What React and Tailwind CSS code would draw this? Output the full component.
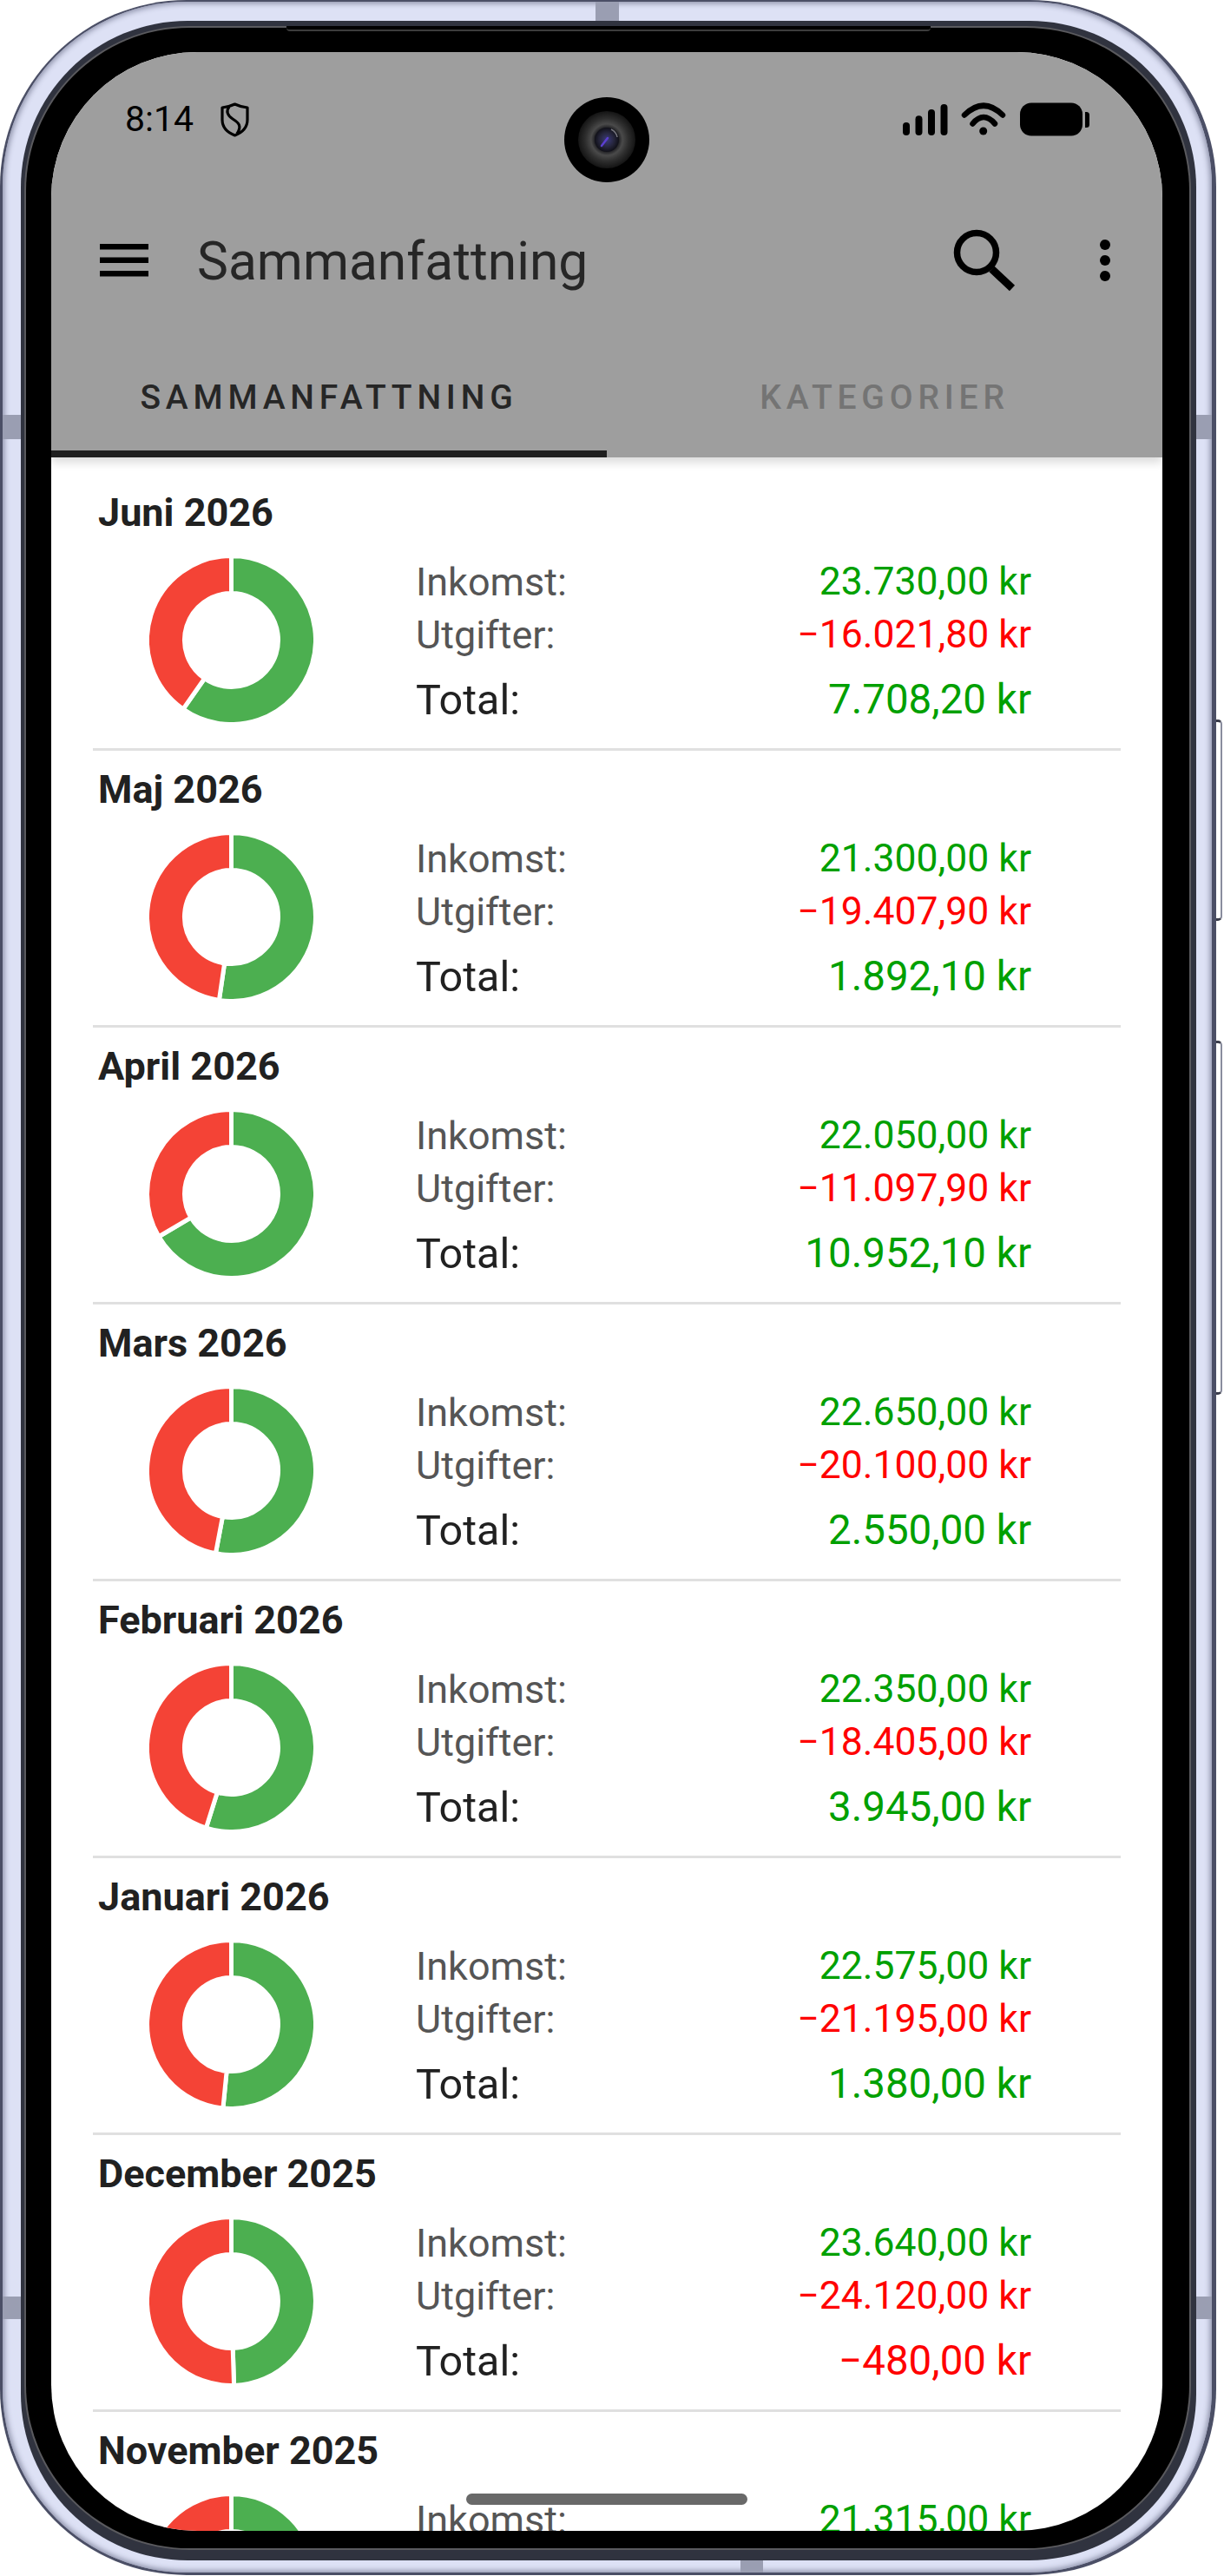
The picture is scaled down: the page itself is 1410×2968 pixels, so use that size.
const months = [
  { name: 'Juni 2026', income: 23730, expense: 16021.8 },
  { name: 'Maj 2026', income: 21300, expense: 19407.9 },
  { name: 'April 2026', income: 22050, expense: 11097.9 },
  { name: 'Mars 2026', income: 22650, expense: 20100 },
  { name: 'Februari 2026', income: 22350, expense: 18405 },
  { name: 'Januari 2026', income: 22575, expense: 21195 },
  { name: 'December 2025', income: 23640, expense: 24120 },
  { name: 'November 2025', income: 21315 },
]

const formatKr = (value) => {
  const [whole, decimals] = Math.abs(value).toFixed(2).split('.')
  const grouped = whole.replace(/\B(?=(\d{3})+$)/g, '.')
  return `${value < 0 ? '\u2212' : ''}${grouped},${decimals} kr`
}

// outer and inner radius sit 2.5 outside the visible ring, so the white stroke only shows at the seams
function arcPath(from, to) {
  const R = 97
  const r = 54
  const point = (radius, turn) => {
    const a = turn * 2 * Math.PI
    return `${(94.5 + radius * Math.sin(a)).toFixed(2)} ${(94.5 - radius * Math.cos(a)).toFixed(2)}`
  }
  const large = to - from > 0.5 ? 1 : 0
  return `M${point(R, from)} A${R} ${R} 0 ${large} 1 ${point(R, to)} L${point(r, to)} A${r} ${r} 0 ${large} 0 ${point(r, from)} Z`
}

function Donut({ income, expense }) {
  const share = expense === undefined ? 0.5 : income / (income + expense)
  return (
    <svg width="189" height="189" viewBox="0 0 189 189" className="shrink-0">
      <path d={arcPath(0, share)} fill="#4caf50" stroke="#ffffff" strokeWidth="5" />
      <path d={arcPath(share, 1)} fill="#f44336" stroke="#ffffff" strokeWidth="5" />
    </svg>
  )
}

function StatLine({ label, value, labelClass, valueClass, className = '' }) {
  return (
    <div className={`flex justify-between h-[61px] leading-[61px] ${className}`}>
      <span className={labelClass}>{label}</span>
      <span className={`${value < 0 ? 'text-[#ff0000]' : 'text-[#00a000]'} ${valueClass}`}>{formatKr(value)}</span>
    </div>
  )
}

function MonthRow({ month }) {
  const { name, income, expense } = month
  return (
    <div className="h-[319px] shrink-0 border-b-[3px] border-[#e0e0e0]">
      <div className="h-[94px] pl-[6px] leading-[89px] text-[45px] font-bold text-[#212121]">{name}</div>
      <div className="flex items-start">
        <div className="ml-[65px] mt-[3px]">
          <Donut income={income} expense={expense} />
        </div>
        <div className="ml-[118px] w-[709px]">
          <StatLine label="Inkomst:" value={income} labelClass="text-[45px] text-[#555555]" valueClass="text-[44.5px]" />
          {expense !== undefined && (
            <>
              <StatLine label="Utgifter:" value={-expense} labelClass="text-[45px] text-[#555555]" valueClass="text-[44.5px]" />
              <StatLine label="Total:" value={income - expense} labelClass="text-[48.5px] text-[#212121]" valueClass="text-[47.5px]" className="mt-[14px]" />
            </>
          )}
        </div>
      </div>
    </div>
  )
}

function ShieldIcon() {
  return (
    <svg width="33" height="40" viewBox="0 0 33 40" fill="none" stroke="#000" strokeWidth="3.2">
      <path d="M16.5 2C12 4.2 7 5.4 2 6V20C2 29 9 35 16.5 38C24 35 31 29 31 20V6C26 5.4 21 4.2 16.5 2Z" strokeLinejoin="round" />
      <path d="M10 5C6 10 8 15 14 19C21 23.5 25 27 19 36" />
    </svg>
  )
}

function StatusIcons() {
  return (
    <svg width="215" height="40" viewBox="0 0 215 40" fill="#000">
      <rect x="0" y="23" width="8" height="15" rx="4" />
      <rect x="14.5" y="15.3" width="8" height="22.7" rx="4" />
      <rect x="29" y="8" width="8" height="30" rx="4" />
      <rect x="43.5" y="2" width="8" height="36" rx="4" />
      <path d="M71 14.5Q93 -7 115 14.5" fill="none" stroke="#000" strokeWidth="6.5" strokeLinecap="round" />
      <path d="M80.5 24.5Q93 9.7 106 24.5" fill="none" stroke="#000" strokeWidth="6.5" strokeLinecap="round" />
      <circle cx="92.7" cy="33" r="4.5" />
      <rect x="135" y="0.5" width="72" height="38" rx="13" />
      <path d="M210 11h1.5a3.5 3.5 0 0 1 3.5 3.5v11a3.5 3.5 0 0 1 -3.5 3.5h-1.5z" />
    </svg>
  )
}

function Camera() {
  return (
    <svg width="98" height="98" viewBox="0 0 98 98" className="absolute z-20 left-[591px] top-[52px]">
      <defs>
        <radialGradient id="lensRing">
          <stop offset="0.4" stopColor="#1c1c20" />
          <stop offset="0.55" stopColor="#4a4a4a" />
          <stop offset="0.75" stopColor="#2e2e2e" />
          <stop offset="1" stopColor="#141414" />
        </radialGradient>
        <radialGradient id="lensGlass">
          <stop offset="0" stopColor="#3a3a7a" />
          <stop offset="0.6" stopColor="#26263c" />
          <stop offset="1" stopColor="#101018" />
        </radialGradient>
      </defs>
      <circle cx="49" cy="49" r="49" fill="#000" />
      <circle cx="49" cy="49" r="33" fill="url(#lensRing)" />
      <circle cx="49" cy="49" r="14" fill="url(#lensGlass)" />
      <path d="M43 56L50 47" stroke="#5b3fd0" strokeWidth="2.5" strokeLinecap="round" />
      <path d="M54 37Q60 40 61 46" stroke="#77777f" strokeWidth="1.5" fill="none" />
    </svg>
  )
}

function Screen() {
  return (
    <div className="relative w-[1280px] h-[2856px] flex flex-col overflow-hidden rounded-[168px] bg-white font-[Roboto,sans-serif]">
      <div className="relative z-10 shrink-0 bg-[#9e9e9e] shadow-[0_6px_10px_rgba(0,0,0,0.14)]">
        <div className="h-[155px] flex items-center pl-[85px] pr-[84px] text-black">
          <span className="text-[41px] leading-none">8:14</span>
          <span className="ml-[31px] flex">
            <ShieldIcon />
          </span>
          <span className="ml-auto flex">
            <StatusIcons />
          </span>
        </div>
        <div className="h-[170px] flex items-center pl-[56px] pr-[60px]">
          <svg width="56" height="38" viewBox="0 0 56 38" className="shrink-0">
            <rect width="56" height="6.5" y="0" />
            <rect width="56" height="6.5" y="15.5" />
            <rect width="56" height="6.5" y="31" />
          </svg>
          <h1 className="ml-[56px] text-[60.5px] leading-none font-normal text-[#262626] mt-[4px]">Sammanfattning</h1>
          <svg width="72" height="72" viewBox="0 0 72 72" className="ml-auto shrink-0" fill="none" stroke="#000">
            <circle cx="27" cy="27" r="22.5" strokeWidth="7.5" />
            <path d="M44.5 46L68 68" strokeWidth="9" />
          </svg>
          <svg width="12" height="54" viewBox="0 0 12 54" className="ml-[97px] shrink-0">
            <circle cx="6" cy="9" r="6" />
            <circle cx="6" cy="27" r="6" />
            <circle cx="6" cy="45" r="6" />
          </svg>
        </div>
        <div className="h-[142px] flex text-[39px] font-medium tracking-[5.8px] leading-[147px] text-center">
          <div className="relative flex-1 text-[#262626]">
            SAMMANFATTNING
            <div className="absolute inset-x-0 bottom-0 h-[8px] bg-[#1f1f1f]" />
          </div>
          <div className="flex-1 text-[#747474]">KATEGORIER</div>
        </div>
      </div>
      <div className="flex-1 flex flex-col mx-[48px] pt-[19px]">
        {months.map((month) => (
          <MonthRow key={month.name} month={month} />
        ))}
      </div>
      <Camera />
      <div className="absolute z-20 left-[478px] bottom-[30px] w-[324px] h-[13px] rounded-full bg-[#696969]" />
    </div>
  )
}

export default function App() {
  return (
    <div className="relative w-[1410px] h-[2968px] bg-white overflow-hidden">
      {/* side buttons */}
      <div className="absolute left-[1398px] top-[829px] w-[10px] h-[232px] rounded-r-[5px] border-y-[3px] border-r-2 border-y-[#3a3c4a] border-r-[#8a8d9e] bg-white" />
      <div className="absolute left-[1398px] top-[1199px] w-[10px] h-[408px] rounded-r-[5px] border-y-[3px] border-r-2 border-y-[#3a3c4a] border-r-[#8a8d9e] bg-white" />

      <div className="relative w-[1401px] h-[2967px] rounded-[215px] bg-[#4b4f66] pl-[3px] pr-[5px] pt-[2px] pb-[3px]">
        <div className="rounded-[212px] bg-[#dde1f5] shadow-[inset_0_0_6px_2px_#8a8ea6] pl-[21px] pr-[18px] pt-[22px] pb-[14px]">
          <div className="rounded-[192px] bg-[#30333f] pl-[4px] pr-[6px] pt-[6px] pb-[12px]">
            <div className="rounded-[190px] bg-[#5a5a5e] p-[2px]">
              <div className="rounded-[188px] bg-black pl-[29px] pr-[31px] pt-[28px] pb-[20px]">
                <Screen />
              </div>
            </div>
          </div>
        </div>

        {/* antenna bands */}
        <div className="absolute left-[3px] top-[478px] w-[21px] h-[28px] bg-[#9a9eb2]" />
        <div className="absolute left-[3px] top-[2646px] w-[21px] h-[26px] bg-[#9a9eb2]" />
        <div className="absolute left-[1378px] top-[478px] w-[18px] h-[28px] bg-[#9a9eb2]" />
        <div className="absolute left-[1378px] top-[2646px] w-[18px] h-[26px] bg-[#9a9eb2]" />
        <div className="absolute left-[686px] top-[2px] w-[27px] h-[22px] bg-[#9a9eb2]" />
        <div className="absolute left-[853px] top-[2950px] w-[26px] h-[14px] bg-[#9a9eb2]" />

        {/* earpiece strip along the top edge */}
        <div className="absolute left-[330px] top-[30px] w-[742px] h-[6px] rounded-b-[4px] bg-black border-b-2 border-[#3c3c3c]" />
      </div>
    </div>
  )
}
